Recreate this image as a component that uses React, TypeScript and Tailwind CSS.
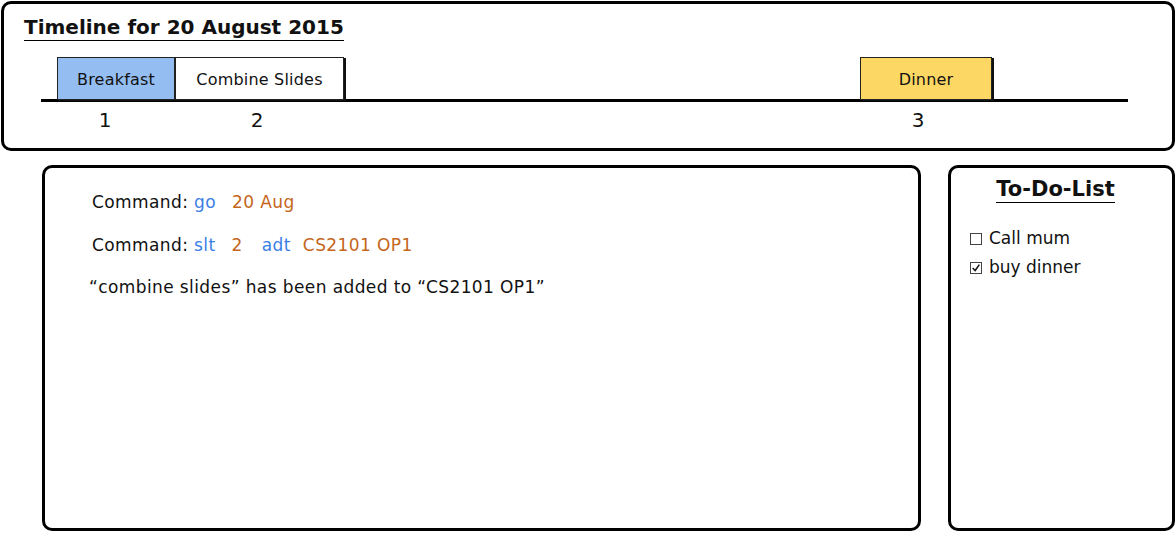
import React from "react";

const font = { fontFamily: '"DejaVu Sans", "Open Sans", sans-serif' };

export default function App() {
  return (
    <div className="w-[1176px] h-[533px] bg-white text-[#111] overflow-hidden" style={font}>
      <div className="pt-px pl-px">
        {/* Timeline panel */}
        <div className="w-[1174px] h-[150px] border-[3px] border-black rounded-[10px] flex flex-col">
          <div className="pl-[20px] pt-[10px]">
            <span className="text-[20px] font-bold leading-[26px] border-b-[1.5px] border-black inline-block pb-[0px]">
              Timeline for 20 August 2015
            </span>
          </div>
          <div className="ml-[37px] w-[1087px] mt-[20px] h-[41px] border-b-[3px] border-black flex items-end">
            <div className="ml-[16px] w-[118px] h-[43px] mb-[-1px] pt-[3px] bg-[#94bdf2] border-[1.5px] border-[#222] shadow-[2px_1px_0_#111] flex items-center justify-center text-[16px] tracking-[0.2px]">
              Breakfast
            </div>
            <div className="w-[169px] h-[43px] mb-[-1px] pt-[3px] bg-white border-[1.5px] border-[#222] shadow-[2px_1px_0_#111] flex items-center justify-center text-[16px] tracking-[0.2px]">
              Combine Slides
            </div>
            <div className="ml-[516px] w-[132px] h-[43px] mb-[-1px] pt-[3px] bg-[#fdd764] border-[1.5px] border-[#222] shadow-[2px_1px_0_#111] flex items-center justify-center text-[16px] tracking-[0.2px]">
              Dinner
            </div>
          </div>
          <div className="ml-[37px] flex text-[20px] leading-[24px] mt-[6px]">
            <div className="ml-[16px] w-[96px] text-center">1</div>
            <div className="w-[208px] text-center">2</div>
            <div className="ml-[478px] w-[158px] text-center">3</div>
          </div>
        </div>

        {/* Bottom row */}
        <div className="flex mt-[14px] ml-[41px] gap-[27px]">
          <div className="w-[879px] h-[366px] border-[3px] border-black rounded-[10px] pl-[47px] pt-[23px] text-[17px] tracking-[0.4px]">
            <div className="leading-[22px]">
              Command: <span className="text-[#3b7ee6]">go</span>
              <span className="ml-[16px] text-[#c4661c]">20 Aug</span>
            </div>
            <div className="leading-[22px] mt-[21px]">
              Command: <span className="text-[#3b7ee6]">slt</span>
              <span className="ml-[16px] text-[#c4661c]">2</span>
              <span className="ml-[19px] text-[#3b7ee6]">adt</span>
              <span className="ml-[12px] text-[#c4661c]">CS2101 OP1</span>
            </div>
            <div className="leading-[22px] mt-[20px] -ml-[3px]">
              “combine slides” has been added to “CS2101 OP1”
            </div>
          </div>
          <div className="w-[227px] h-[366px] border-[3px] border-black rounded-[10px] flex flex-col">
            <div className="flex justify-center pt-[9px] pr-[12px]">
              <span className="text-[21px] font-bold leading-[24px] border-b-[1.5px] border-black pb-[1px]">
                To-Do-List
              </span>
            </div>
            <div className="pl-[19px] mt-[21px] text-[17px] leading-[29px]">
              <div className="flex items-center">
                <span className="w-[12px] h-[12px] border border-[#444] mr-[7px] inline-block"></span>
                Call mum
              </div>
              <div className="flex items-center">
                <span className="w-[12px] h-[12px] border border-[#444] mr-[7px] inline-flex items-center justify-center">
                  <svg viewBox="0 0 12 12" width="12" height="12">
                    <path d="M2 6 L5 9 L10 2" fill="none" stroke="#111" strokeWidth="1.8" />
                  </svg>
                </span>
                buy dinner
              </div>
            </div>
          </div>
        </div>
      </div>
    </div>
  );
}
